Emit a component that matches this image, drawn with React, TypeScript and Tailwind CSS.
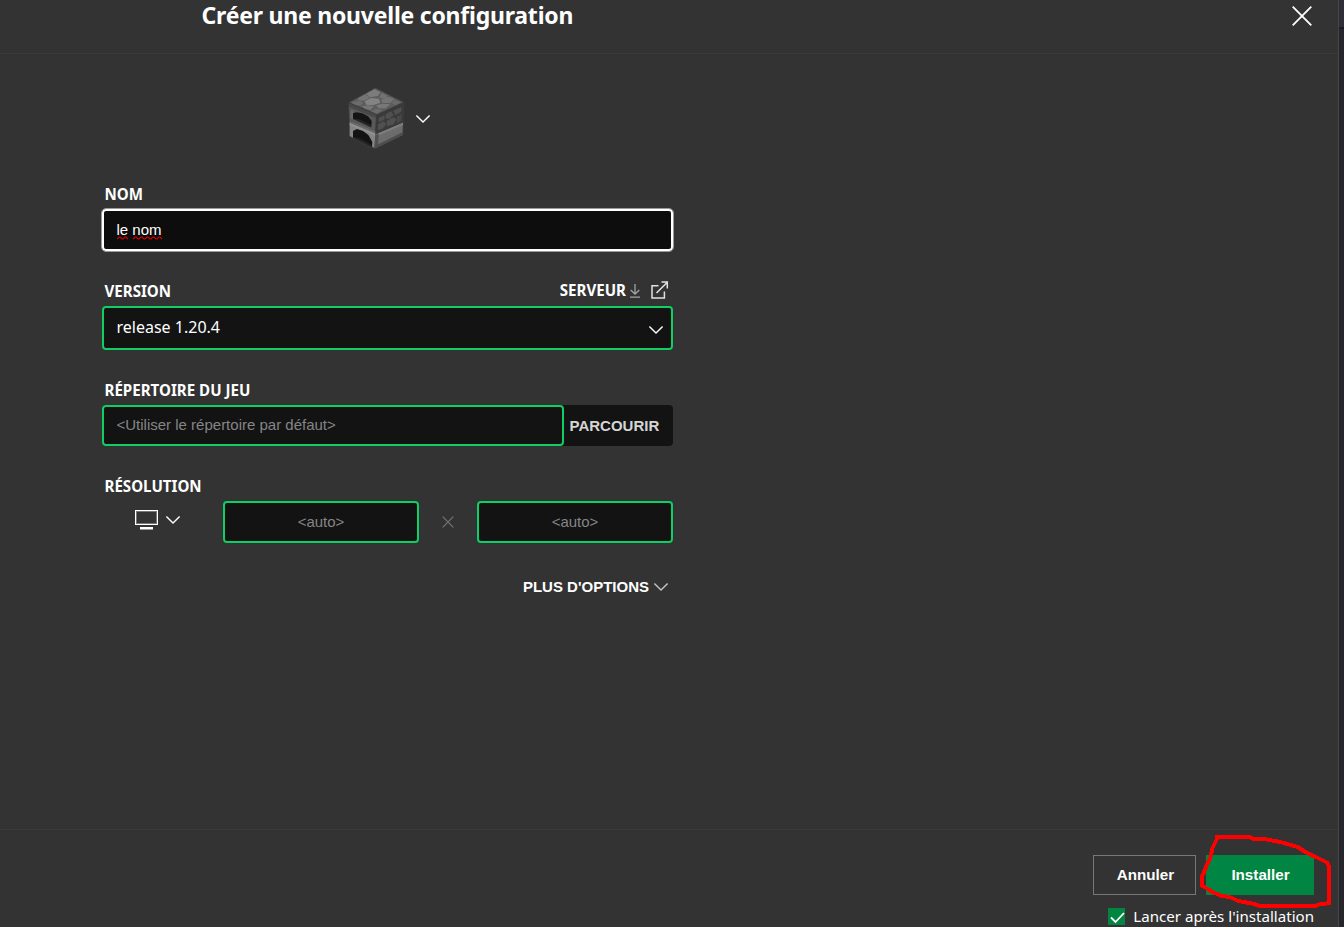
import React from "react";

type IconProps = { className?: string };

function Chevron({ className = "" }: IconProps) {
  return (
    <svg className={className} width="16" height="10" viewBox="0 0 16 10" fill="none" stroke="currentColor" strokeWidth="1.4">
      <path d="M1.4 1.5 8 8 14.6 1.5" />
    </svg>
  );
}

function Cross({ size, stroke, className = "" }: IconProps & { size: number; stroke: number }) {
  return (
    <svg className={className} width={size} height={size} viewBox={`0 0 ${size} ${size}`} fill="none" stroke="currentColor" strokeWidth={stroke}>
      <path d={`M.7 .7 ${size - 0.7} ${size - 0.7} M${size - 0.7} .7 .7 ${size - 0.7}`} />
    </svg>
  );
}

function Furnace() {
  return (
    <svg className="blur-[0.5px]" width="60" height="64" viewBox="52 37 180 192">
      <path d="M137 38 224 82 221 182 135 224 60 186 55 84Z" fill="#3c3c3c" />
      <path d="M137 41 220 83 142 119 60 83Z" fill="#5c5c5c" />
      <g fill="#7c7c7c">
        <path d="M110 57 134 44 152 52 145 64 120 68Z" />
        <path d="M86 70 108 59 120 69 105 78 86 77Z" fill="#747474" />
        <path d="M155 54 174 63 168 73 149 69Z" fill="#727272" />
        <path d="M105 80 124 70 148 72 152 84 130 92 110 90Z" fill="#838383" />
        <path d="M154 75 176 66 194 73 182 85 159 85Z" fill="#747474" />
        <path d="M64 84 86 78 102 83 92 93 78 91Z" fill="#6c6c6c" />
        <path d="M96 94 119 92 133 96 122 106 106 102Z" fill="#757575" />
        <path d="M139 92 159 87 182 89 168 101 147 101Z" fill="#787878" />
        <path d="M185 84 196 76 213 83 197 91Z" fill="#6a6a6a" />
        <path d="M124 109 139 102 159 106 141 117Z" fill="#6c6c6c" />
      </g>
      <path d="M58 88 139 122 136 170 60 138Z" fill="#595959" />
      <path d="M58 86 139 120 139 130 58 96Z" fill="#484848" />
      <path d="M64 106 70 108 70 134 62 130Z" fill="#686868" />
      <path d="M70 132 70 116 80 113 98 116 115 125 126 139 125 158Z" fill="#141414" />
      <path d="M70 132 88 134 124 151 124 158Z" fill="#262626" />
      <path d="M60 138 137 170 137 176 60 144Z" fill="#6c6c6c" />
      <path d="M60 144 137 176 134 220 126 215 126 204 118 187 103 174 83 166 71 169 70 189 60 184Z" fill="#858585" />
      <path d="M60 145 137 177 137 183 60 151Z" fill="#929292" />
      <path d="M70 188 70 169 82 163 100 169 116 181 128 202 127 216Z" fill="#131313" />
      <path d="M70 187 88 190 107 199 126 212 126 217Z" fill="#222222" />
      <path d="M141 123 222 85 220 145 138 181Z" fill="#3a3a3a" />
      <g fill="#505050">
        <path d="M147 130 165 121 164 135 147 143Z" />
        <path d="M169 118 185 110 192 121 179 133 167 131Z" />
        <path d="M190 109 216 97 215 111 198 121Z" />
        <path d="M145 149 162 140 170 148 161 161 145 167Z" />
        <path d="M171 139 191 128 200 133 192 149 172 155Z" />
        <path d="M201 127 216 118 215 138 201 146Z" fill="#484848" />
      </g>
      <path d="M138 180 220 144 218 181 136 221Z" fill="#6c6c6c" />
      <path d="M138 179 220 144 220 151 138 186Z" fill="#7d7d7d" />
      <path d="M138 180 147 177 145 215 136 220Z" fill="#505050" />
      <path d="M137 213 218 173 217 182 136 221Z" fill="#4d4d4d" />
    </svg>
  );
}

function Label({ children }: { children: React.ReactNode }) {
  return <span className="pl-[2.5px] font-['Noto_Sans'] text-[15.1px] leading-[22px] font-bold">{children}</span>;
}

const FIELD =
  "rounded border-2 border-[#0fce63] bg-[#131313] font-['Liberation_Sans'] text-[15px] outline-none placeholder:text-[#858585] placeholder:opacity-100";

export default function App() {
  return (
    <div className="flex h-[927px] w-[1344px] overflow-hidden bg-[#333333] font-['Noto_Sans',sans-serif] text-white">
      <div className="flex w-[1338px] shrink-0 flex-col">
        <header className="flex h-[54px] shrink-0 items-start justify-between border-b border-[#3a3a3a] pr-[26px] pl-[201.5px]">
          <h1 className="text-[23px] leading-[30px] font-bold tracking-[-0.22px]">Créer une nouvelle configuration</h1>
          <button className="pt-[6px]" aria-label="Fermer">
            <Cross size={20} stroke={1.8} />
          </button>
        </header>

        <main className="h-[775px] shrink-0 pt-[33px] pl-[102px]">
          <form className="flex w-[571px] flex-col">
            <div className="flex h-16 items-center gap-2 pl-[245px]">
              <Furnace />
              <Chevron />
            </div>

            <div className="mt-8 flex h-[26px] items-start">
              <Label>NOM</Label>
            </div>
            <div className="flex h-[42px] items-center rounded border-2 border-white bg-[#0d0d0d] pl-[12.5px] font-['Liberation_Sans'] text-[15px] outline-1 outline-[#9a9a9a]">
              <span className="relative">
                le nom
                <svg className="absolute top-[17.5px] left-0" width="46" height="4" viewBox="0 0 46 4" fill="none" stroke="#d80000" strokeWidth="1.1">
                  <path d="M0 3 2 1 3 1 5 3 6 3 8 1 9 1 11 3M16 3 18 1 19 1 21 3 22 3 24 1 25 1 27 3 28 3 30 1 31 1 33 3 34 3 36 1 37 1 39 3 40 3 42 1 43 1 45 3" />
                </svg>
              </span>
            </div>

            <div className="mt-[29px] flex h-[26px] items-start justify-between pr-1">
              <Label>VERSION</Label>
              <div className="-mt-px flex items-center">
                <Label>SERVEUR</Label>
                <svg className="mt-px ml-1" width="10" height="14" viewBox="0 0 10 14" fill="none" stroke="#a3a3a3" strokeWidth="1.3">
                  <path d="M5 0V10M.7 6 5 10 9.3 6M0 13.2H10" />
                </svg>
                <svg className="ml-[11px]" width="18" height="18" viewBox="0 0 18 18" fill="none" stroke="#e2e2e2" strokeWidth="1.5">
                  <path d="M7.5 4.7H1V17H13.4V10.5M5.5 12 16.3 1.2M10.5 1H16.3V7.5" />
                </svg>
              </div>
            </div>
            <div className="flex h-11 items-center justify-between rounded border-2 border-[#0fce63] bg-[#131313] pr-[7px] pl-[12.5px]">
              <span className="-mt-0.5 text-base leading-6">release 1.20.4</span>
              <Chevron className="mt-1" />
            </div>

            <div className="mt-[29px] flex h-[26px] items-start">
              <Label>RÉPERTOIRE DU JEU</Label>
            </div>
            <div className="flex h-[41px] rounded bg-[#131313]">
              <input className={`${FIELD} w-[462px] pl-[12.5px]`} placeholder="<Utiliser le répertoire par défaut>" />
              <button type="button" className="pt-0.5 pl-[5.5px] font-['Liberation_Sans'] text-[15px] font-bold text-[#d5d5d5]">
                PARCOURIR
              </button>
            </div>

            <div className="mt-[29px] flex h-[26px] items-start">
              <Label>RÉSOLUTION</Label>
            </div>
            <div className="flex h-[42px] items-center">
              <div className="flex w-[121px] items-center gap-[6px] pb-1 pl-8">
                <svg className="-mt-px" width="25" height="21" viewBox="0 0 25 21" fill="none" stroke="#fff">
                  <rect x="1.5" y="1.5" width="22" height="14" />
                  <rect x="2.5" y="2.5" width="20" height="12" stroke="#777" />
                  <path d="M6 19.25H19" strokeWidth="2.5" />
                </svg>
                <Chevron />
              </div>
              <input className={`${FIELD} h-full w-[196px] pb-0.5 text-center`} placeholder="<auto>" />
              <div className="flex w-[58px] justify-center">
                <Cross size={12} stroke={1.1} className="text-[#777777]" />
              </div>
              <input className={`${FIELD} h-full w-[196px] pb-0.5 text-center`} placeholder="<auto>" />
            </div>

            <button type="button" className="mt-8 flex h-[22px] items-center justify-end gap-1 pr-1 font-['Liberation_Sans'] text-[15px] font-bold">
              <span className="pt-0.5">PLUS D'OPTIONS</span>
              <Chevron className="mt-0.5 text-[#c4c4c4]" />
            </button>
          </form>
        </main>

        <footer className="flex h-[98px] shrink-0 flex-col items-end border-t border-[#3a3a3a] pt-[25px] pr-6">
          <div className="flex h-10 shrink-0 gap-[10px]">
            <button className="w-[103px] border border-[#777777] pt-px pl-0.5 font-['Liberation_Sans'] text-[15.2px] font-bold">Annuler</button>
            <div className="relative flex">
              <button className="w-[108px] bg-[#008542] pt-px pl-px font-['Liberation_Sans'] text-[15.2px] font-bold">Installer</button>
              <svg className="pointer-events-none absolute -top-[35px] -left-[26px]" width="160" height="107" viewBox="1180 820 160 107" fill="none" stroke="#ff0000" strokeWidth="4" strokeLinecap="square" strokeLinejoin="round" shapeRendering="crispEdges">
                <path d="M1217 837 1250 837 1253 839 1267 839.5 1280 842 1298 847 1305 852 1317 857.5 1327 862.5 1329 866 1329 888 1329.5 903 1319 904.5 1315 906 1260 906 1252 903.5 1238 901 1230 897 1221.5 896 1211.5 891.5 1202 885.5 1202 877 1206 867 1210.5 857 1212.5 848 1217 839" />
              </svg>
            </div>
          </div>
          <label className="mt-[10px] flex h-[22px] shrink-0 items-center gap-2">
            <span className="flex size-[17px] items-center justify-center bg-[#008542] pt-0.5 pl-0.5">
              <svg width="15" height="13" viewBox="0 0 15 13" fill="none" stroke="#fff" strokeWidth="1.8">
                <path d="M1 6.5 5.5 11 14 2" />
              </svg>
            </span>
            <span className="text-[15.1px] leading-[22px]">Lancer après l'installation</span>
          </label>
        </footer>
      </div>
      <aside className="flex w-[6px] flex-col border-l border-[#464646] bg-[#25252b]">
        <div className="h-[29px] border-b-2 border-[#1c1c20] bg-[#2e2e36]" />
      </aside>
    </div>
  );
}
